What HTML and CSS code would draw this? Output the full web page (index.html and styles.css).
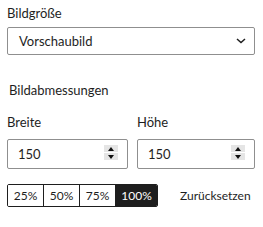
FILE: index.html
```html
<!DOCTYPE html>
<html lang="de">
<head>
  <meta charset="UTF-8" />
  <meta name="viewport" content="width=device-width, initial-scale=1.0" />
  <title>Bildgröße</title>
  <link rel="stylesheet" href="styles.css">
</head>
<body>
  <div class="panel">
    <label class="field-label">Bildgröße</label>
    <div class="select-box">
      <span>Vorschaubild</span>
      <svg class="chevron" width="10" height="6" viewBox="0 0 10 6">
        <path d="M1 1 L5 4.5 L9 1" fill="none" stroke="#1e1e1e" stroke-width="1.5" />
      </svg>
    </div>

    <div class="section-title">Bildabmessungen</div>

    <div class="dims">
      <div class="dim">
        <label class="field-label">Breite</label>
        <div class="num-input">
          <span>150</span>
          <span class="spin"><i class="up"></i><i class="down"></i></span>
        </div>
      </div>
      <div class="dim">
        <label class="field-label">Höhe</label>
        <div class="num-input">
          <span>150</span>
          <span class="spin"><i class="up"></i><i class="down"></i></span>
        </div>
      </div>
    </div>

    <div class="scale-row">
      <div class="segments">
        <button class="seg">25%</button>
        <button class="seg">50%</button>
        <button class="seg">75%</button>
        <button class="seg active">100%</button>
      </div>
      <button class="reset">Zurücksetzen</button>
    </div>
  </div>
</body>
</html>
```

FILE: styles.css
```css
body {
  margin: 0;
  background: #fff;
  color: #1e1e1e;
  font-family: Lato, "Noto Sans", sans-serif;
  font-size: 13px;
  line-height: 18px;
}
.panel {
  padding: 4px 8px 0 7px;
}
.field-label {
  display: block;
}
.select-box {
  margin-top: 5px;
  height: 28px;
  box-sizing: border-box;
  border: 1px solid #8f8f8f;
  border-radius: 2px;
  display: flex;
  align-items: center;
  justify-content: space-between;
  padding: 0 8px 0 11px;
}
.chevron {
  display: block;
}
.section-title {
  margin-top: 26px;
  margin-left: 2px;
}
.dims {
  margin-top: 14px;
  display: grid;
  grid-template-columns: 121px 1fr;
  column-gap: 9px;
}
.num-input {
  margin-top: 8px;
  height: 30px;
  box-sizing: border-box;
  border: 1px solid #8f8f8f;
  border-radius: 2px;
  display: flex;
  align-items: center;
  justify-content: space-between;
  padding: 0 9px 0 10px;
}
.spin {
  width: 14px;
  height: 15px;
  background: #e5e5e5;
  display: flex;
  flex-direction: column;
  margin-top: -3px;
}
.spin i {
  flex: 1;
  display: flex;
  align-items: center;
  justify-content: center;
}
.spin .up {
  border-bottom: 1px solid #fff;
}
.spin i::after {
  content: "";
  border-left: 3px solid transparent;
  border-right: 3px solid transparent;
}
.spin .up::after {
  border-bottom: 4px solid #111;
}
.spin .down::after {
  border-top: 4px solid #111;
}
.scale-row {
  margin-top: 15px;
  display: flex;
  align-items: center;
}
.segments {
  display: flex;
  border: 1px solid #1e1e1e;
  border-radius: 2px;
  overflow: hidden;
}
.seg {
  font: inherit;
  font-size: 12px;
  height: 21px;
  width: 36px;
  padding: 0;
  border: none;
  border-left: 1px solid #1e1e1e;
  background: #fff;
  color: #1e1e1e;
}
.seg:first-child {
  border-left: none;
  width: 35px;
}
.seg.active {
  width: 42px;
  background: #1e1e1e;
  color: #fff;
}
.reset {
  font: inherit;
  font-size: 12px;
  margin-left: 22px;
  padding: 0;
  border: none;
  background: none;
  color: #1e1e1e;
}
```
